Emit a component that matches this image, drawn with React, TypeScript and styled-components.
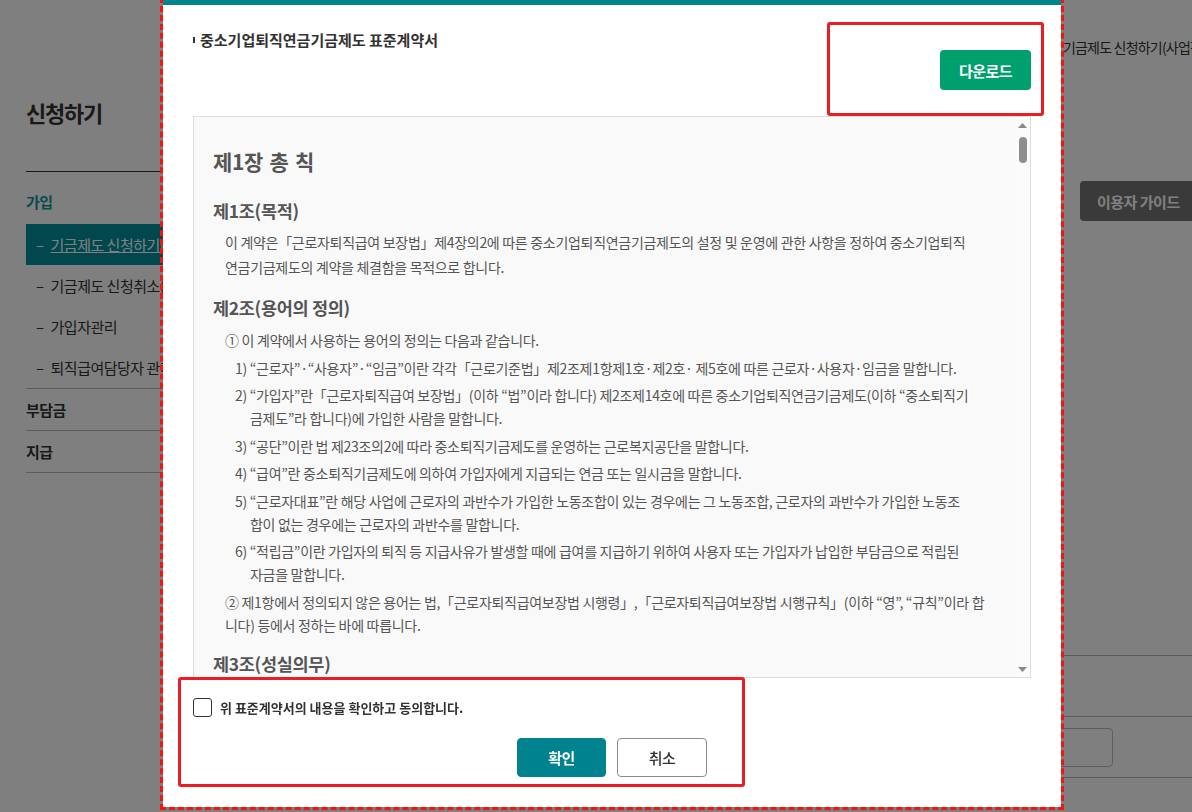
import React from "react";
import styled, { createGlobalStyle } from "styled-components";

const GlobalStyle = createGlobalStyle`
  html, body { margin: 0; padding: 0; }
  body {
    width: 1192px;
    height: 812px;
    overflow: hidden;
    background: #fff;
    font-family: "Noto Sans CJK KR", "Noto Sans", sans-serif;
    color: #333;
  }
  * { box-sizing: border-box; }
`;

/* ---------- background page ---------- */
const Page = styled.div`
  display: flex;
  width: 1206px;
  height: 812px;
  padding-left: 26px;
`;

const Sidebar = styled.aside`
  width: 230px;
  flex-shrink: 0;
  padding-top: 96px;
`;

const SideTitle = styled.h2`
  margin: 0;
  padding-bottom: 43px;
  border-bottom: 1px solid #333;
  font-size: 22px;
  line-height: 32px;
  font-weight: 700;
  letter-spacing: -1.2px;
  color: #333;
`;

const MenuGroup = styled.div<{ $last?: boolean }>`
  border-bottom: ${(p) => (p.$last ? "1px solid #b8b8b8" : "none")};
`;

const GroupLabel = styled.div<{ $teal?: boolean; $lined?: boolean }>`
  font-size: 15px;
  font-weight: 700;
  letter-spacing: -0.5px;
  color: ${(p) => (p.$teal ? "#14949f" : "#333")};
  line-height: ${(p) => (p.$lined ? "41px" : "20px")};
  padding-top: ${(p) => (p.$lined ? "0" : "20px")};
  margin-bottom: ${(p) => (p.$lined ? "0" : "12px")};
  border-top: ${(p) => (p.$lined ? "1px solid #b8b8b8" : "none")};
`;

const SubItem = styled.div<{ $active?: boolean }>`
  display: flex;
  align-items: center;
  gap: 7px;
  height: 41px;
  padding-left: 10px;
  font-size: 15px;
  letter-spacing: -0.5px;
  white-space: nowrap;
  background: ${(p) => (p.$active ? "#00909c" : "transparent")};
  color: ${(p) => (p.$active ? "#fff" : "#333")};
  span:last-child {
    text-decoration: ${(p) => (p.$active ? "underline" : "none")};
  }
`;

const Main = styled.main`
  flex: 1;
  padding-left: 40px;
  display: flex;
  flex-direction: column;
`;

const Breadcrumb = styled.div`
  padding-top: 37px;
  line-height: 20px;
  font-size: 14px;
  letter-spacing: -0.8px;
  color: #333;
  text-align: right;
  white-space: nowrap;
`;

const TitleRow = styled.div`
  margin-top: 124px;
  display: flex;
  justify-content: space-between;
  align-items: center;
  height: 40px;
`;

const PageTitle = styled.h3`
  margin: 0;
  font-size: 24px;
  font-weight: 700;
  color: #222;
`;

const GuideButton = styled.button`
  width: 126px;
  height: 40px;
  padding: 0 0 0 17px;
  text-align: left;
  border: none;
  border-radius: 4px;
  background: #747474;
  color: #fff;
  font-family: inherit;
  font-size: 15px;
  font-weight: 700;
  letter-spacing: -0.5px;
`;

const FormTable = styled.div`
  margin-top: 374px;
  display: flex;
  flex-direction: column;
`;

const FormRow = styled.div`
  height: 61px;
  border-bottom: 1px solid #b8b8b8;
  display: flex;
  align-items: center;
  padding-left: 520px;
`;

const FormInput = styled.div`
  width: 297px;
  height: 39px;
  border: 1px solid #bbb;
  border-radius: 4px;
  background: #fff;
`;

const Dim = styled.div`
  position: fixed;
  inset: 0;
  background: rgba(0, 0, 0, 0.5);
`;

/* ---------- modal ---------- */
const Modal = styled.section`
  position: fixed;
  left: 163px;
  top: 0;
  width: 898px;
  height: 807px;
  background: #fff;
  border-top: 5px solid #00838f;
  outline: 3px dashed #ff1010;
  padding: 0 30px 30px;
  display: flex;
  flex-direction: column;
`;

const ModalHeader = styled.header`
  display: flex;
  justify-content: space-between;
  align-items: flex-start;
  height: 111px;
  flex-shrink: 0;
`;

const ModalTitle = styled.h2`
  margin: 24px 0 0;
  display: flex;
  align-items: center;
  font-size: 15px;
  line-height: 22px;
  font-weight: 700;
  letter-spacing: 0;
  color: #333;
  &::before {
    content: "";
    width: 2px;
    height: 6px;
    margin-right: 5px;
    background: #333;
  }
`;

const DownloadButton = styled.button`
  margin-top: 45px;
  width: 91px;
  height: 40px;
  border: none;
  border-radius: 4px;
  background: #00a06e;
  color: #fff;
  font-family: inherit;
  font-size: 15px;
  font-weight: 700;
  letter-spacing: -0.5px;
`;

const Callout = styled.div<{ $x: number; $y: number; $w: number; $h: number }>`
  position: absolute;
  left: ${(p) => p.$x}px;
  top: ${(p) => p.$y}px;
  width: ${(p) => p.$w}px;
  height: ${(p) => p.$h}px;
  border: 3px solid #ec1c24;
  border-radius: 3px;
  pointer-events: none;
`;

const ContractBox = styled.div`
  height: 562px;
  flex-shrink: 0;
  display: flex;
  border: 1px solid #ddd;
  background: #f9f9f9;
  overflow: hidden;
`;

const ContractBody = styled.div`
  flex: 1;
  padding: 30px 0 0 19px;
  white-space: nowrap;
  color: #555;
`;

const Chapter = styled.h3`
  margin: 0 0 23px;
  font-size: 21px;
  line-height: 28px;
  font-weight: 700;
  letter-spacing: -0.3px;
  word-spacing: 2px;
  color: #555;
`;

const Article = styled.h4`
  margin: 14.5px 0 6px;
  font-size: 17.5px;
  line-height: 26px;
  font-weight: 700;
  letter-spacing: -0.3px;
  color: #555;
  &:first-of-type {
    margin-top: 0;
  }
`;

const Para = styled.p`
  margin: 0;
  padding-left: 12px;
  font-size: 14px;
  line-height: 25px;
  letter-spacing: -0.3px;
`;

const ClauseList = styled.div`
  padding-top: 2.5px;
`;

const Clause = styled.p<{ $sub?: boolean }>`
  margin: 4.5px 0 0;
  padding-left: ${(p) => (p.$sub ? "37px" : "12px")};
  text-indent: ${(p) => (p.$sub ? "-15px" : "0")};
  font-size: 14px;
  line-height: 23px;
  letter-spacing: -0.3px;
  &:first-child {
    margin-top: 0;
  }
`;

const ScrollTrack = styled.div`
  width: 15px;
  flex-shrink: 0;
  display: flex;
  flex-direction: column;
  align-items: center;
  padding: 6px 0 5px;
  background: #fbfbfb;
`;

const ScrollThumb = styled.div`
  margin-top: 9px;
  width: 8px;
  height: 26px;
  border-radius: 4px;
  background: #8e8e8e;
`;

const TrackSpacer = styled.div`
  flex: 1;
`;

const AgreeRow = styled.label`
  margin-top: 20px;
  display: flex;
  align-items: center;
  gap: 8px;
  font-size: 13px;
  line-height: 19px;
  font-weight: 700;
  letter-spacing: 0;
  color: #333;
`;

const CheckBox = styled.input`
  appearance: none;
  margin: 0;
  width: 19px;
  height: 19px;
  border: 1px solid #333;
  border-radius: 3px;
  background: #fff;
`;

const ButtonRow = styled.div`
  margin-top: 21px;
  display: flex;
  justify-content: center;
  gap: 11px;
`;

const ActionButton = styled.button<{ $primary?: boolean }>`
  width: ${(p) => (p.$primary ? "89px" : "90px")};
  height: 39px;
  border-radius: 4px;
  border: 1px solid ${(p) => (p.$primary ? "#00838f" : "#8a8a8a")};
  background: ${(p) => (p.$primary ? "#00838f" : "#fff")};
  color: ${(p) => (p.$primary ? "#fff" : "#333")};
  font-family: inherit;
  font-size: 15px;
  font-weight: ${(p) => (p.$primary ? 700 : 500)};
  letter-spacing: -0.5px;
`;

const Arrow = ({ up }: { up?: boolean }) => (
  <svg width="9" height="5" viewBox="0 0 9 5" style={{ display: "block" }}>
    <polygon points={up ? "4.5,0 9,5 0,5" : "0,0 9,0 4.5,5"} fill="#8a8a8a" />
  </svg>
);

export default function App() {
  return (
    <>
      <GlobalStyle />
      <Page>
        <Sidebar>
          <SideTitle>신청하기</SideTitle>
          <MenuGroup>
            <GroupLabel $teal>가입</GroupLabel>
            <SubItem $active>
              <span>–</span>
              <span>기금제도 신청하기(사업장)</span>
            </SubItem>
            <SubItem>
              <span>–</span>
              <span>기금제도 신청취소(사업장)</span>
            </SubItem>
            <SubItem>
              <span>–</span>
              <span>가입자관리</span>
            </SubItem>
            <SubItem>
              <span>–</span>
              <span>퇴직급여담당자 관리</span>
            </SubItem>
          </MenuGroup>
          <MenuGroup>
            <GroupLabel $lined>부담금</GroupLabel>
          </MenuGroup>
          <MenuGroup $last>
            <GroupLabel $lined>지급</GroupLabel>
          </MenuGroup>
        </Sidebar>
        <Main>
          <Breadcrumb>홈 &gt; 가입 &gt; 기금제도 신청하기(사업장)</Breadcrumb>
          <TitleRow>
            <PageTitle>기금제도 신청하기(사업장)</PageTitle>
            <GuideButton>이용자 가이드</GuideButton>
          </TitleRow>
          <FormTable>
            <FormRow />
            <FormRow />
            <FormRow>
              <FormInput />
            </FormRow>
          </FormTable>
        </Main>
      </Page>
      <Dim />
      <Modal>
        <Callout $x={664} $y={17} $w={217} $h={94} />
        <Callout $x={15} $y={672} $w={567} $h={110} />
        <ModalHeader>
          <ModalTitle>중소기업퇴직연금기금제도 표준계약서</ModalTitle>
          <DownloadButton>다운로드</DownloadButton>
        </ModalHeader>
        <ContractBox>
          <ContractBody>
            <Chapter>제1장 총 칙</Chapter>
            <Article>제1조(목적)</Article>
            <Para>
              이 계약은「근로자퇴직급여 보장법」제4장의2에 따른 중소기업퇴직연금기금제도의 설정 및 운영에 관한 사항을 정하여 중소기업퇴직
              <br />
              연금기금제도의 계약을 체결함을 목적으로 합니다.
            </Para>
            <Article>제2조(용어의 정의)</Article>
            <ClauseList>
              <Clause>① 이 계약에서 사용하는 용어의 정의는 다음과 같습니다.</Clause>
              <Clause $sub>
                1) “근로자”·“사용자”·“임금”이란 각각「근로기준법」제2조제1항제1호·제2호· 제5호에 따른 근로자·사용자·임금을 말합니다.
              </Clause>
              <Clause $sub>
                2) “가입자”란「근로자퇴직급여 보장법」(이하 “법”이라 합니다) 제2조제14호에 따른 중소기업퇴직연금기금제도(이하 “중소퇴직기
                <br />
                금제도”라 합니다)에 가입한 사람을 말합니다.
              </Clause>
              <Clause $sub>
                3) “공단”이란 법 제23조의2에 따라 중소퇴직기금제도를 운영하는 근로복지공단을 말합니다.
              </Clause>
              <Clause $sub>
                4) “급여”란 중소퇴직기금제도에 의하여 가입자에게 지급되는 연금 또는 일시금을 말합니다.
              </Clause>
              <Clause $sub>
                5) “근로자대표”란 해당 사업에 근로자의 과반수가 가입한 노동조합이 있는 경우에는 그 노동조합, 근로자의 과반수가 가입한 노동조
                <br />
                합이 없는 경우에는 근로자의 과반수를 말합니다.
              </Clause>
              <Clause $sub>
                6) “적립금”이란 가입자의 퇴직 등 지급사유가 발생할 때에 급여를 지급하기 위하여 사용자 또는 가입자가 납입한 부담금으로 적립된
                <br />
                자금을 말합니다.
              </Clause>
              <Clause>
                ② 제1항에서 정의되지 않은 용어는 법,「근로자퇴직급여보장법 시행령」,「근로자퇴직급여보장법 시행규칙」(이하 “영”, “규칙”이라 합
                <br />
                니다) 등에서 정하는 바에 따릅니다.
              </Clause>
            </ClauseList>
            <Article>제3조(성실의무)</Article>
            <Para>사용자와 공단은 이 계약을 성실히 이행하여야 합니다.</Para>
          </ContractBody>
          <ScrollTrack>
            <Arrow up />
            <ScrollThumb />
            <TrackSpacer />
            <Arrow />
          </ScrollTrack>
        </ContractBox>
        <AgreeRow>
          <CheckBox type="checkbox" />
          위 표준계약서의 내용을 확인하고 동의합니다.
        </AgreeRow>
        <ButtonRow>
          <ActionButton $primary>확인</ActionButton>
          <ActionButton>취소</ActionButton>
        </ButtonRow>
      </Modal>
    </>
  );
}
